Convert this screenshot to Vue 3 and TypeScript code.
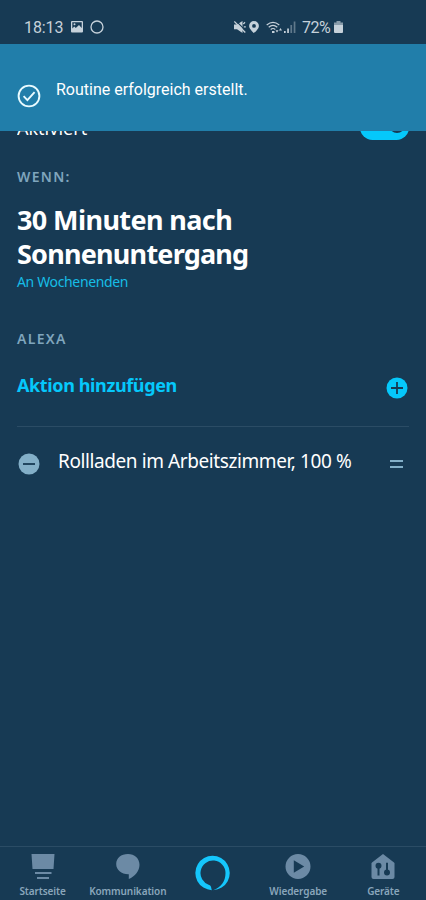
<script setup lang="ts">
interface NavItem { id: string; label: string }
const nav: NavItem[] = [
  { id: 'home', label: 'Startseite' },
  { id: 'chat', label: 'Kommunikation' },
  { id: 'alexa', label: '' },
  { id: 'play', label: 'Wiedergabe' },
  { id: 'devices', label: 'Geräte' },
]
</script>

<template>
  <div class="screen">
    <header class="status">
      <span class="time">18:13</span>
      <svg class="picture" width="12" height="12" viewBox="0 0 12 12"><path fill-rule="evenodd" d="M1 0h10q1 0 1 1v9.500q0 1-1 1H1q-1 0-1-1V1q0-1 1-1zM1.300 1.300v6.200l2-2 1.500 1.500L8 4l2.700 3V1.300zM3.500 2.200a1 1 0 1 1 0 2 1 1 0 0 1 0-2z" /></svg>
      <svg class="ring" width="14" height="14" viewBox="0 0 14 14"><circle cx="7" cy="7" r="6" /></svg>
      <div class="signals">
        <svg width="12" height="12" viewBox="0 0 12 12"><path d="M0 3.500h3L8.500 0v12L3 8.300H0z" /><path class="mute" d="M1.500-.5l11 11" /><path d="M.3.500l11 11M9.300 3l1.700-1.700M9.800 5.800h2" stroke="#c6d1da" stroke-width="1.300" /></svg>
        <svg class="pin" width="10" height="12" viewBox="0 0 10 12"><path fill-rule="evenodd" d="M5 0a4.900 4.900 0 0 1 4.900 4.900C9.900 8 5 12 5 12S.1 8 .1 4.900A4.900 4.900 0 0 1 5 0zm0 3a1.900 1.900 0 1 0 0 3.800A1.900 1.900 0 0 0 5 3z" /></svg>
        <svg class="wifi" width="17" height="13" viewBox="0 0 17 13"><path d="M.7 4Q7 -1.300 13.300 4M2.700 6.300Q7 2.500 11.300 6.300M4.700 8.500Q7 6.500 9.300 8.500" /><path class="traffic" d="M9.500 9.200h3L11 11.500zM13 9.500h3L14.500 7zM6 10h2.500v2H6z" /></svg>
        <svg class="bars" width="12" height="12" viewBox="0 0 12 12"><path d="M0 10h1.700v2H0zM3.200 7.500h1.700V12H3.200z" /><path opacity=".42" d="M6.400 4h1.700v8H6.400zM9.700.5h1.700V12H9.700z" /></svg>
        <span class="percent">72%</span>
        <svg class="battery" width="9" height="12" viewBox="0 0 9 12"><path opacity=".65" d="M2.500 0h4v1.500H9V5H0V1.500h2.500z" /><path d="M0 4h9v7q0 1-1 1H1q-1 0-1-1z" /></svg>
      </div>
    </header>

    <div class="toast">
      <svg width="24" height="24" viewBox="0 0 24 24"><circle cx="12" cy="12" r="10.400" /><path d="M6.600 12.200l3.800 4 7.200-8" /></svg>
      <span class="toast-text">Routine erfolgreich erstellt.</span>
    </div>

    <main>
      <div class="enabled">
        <span class="enabled-label">Aktiviert</span>
        <span class="toggle"><span class="knob"></span></span>
      </div>
      <h2 class="when">WENN:</h2>
      <h1>30 Minuten nach<br><span class="second">Sonnenuntergang</span></h1>
      <p class="days">An Wochenenden</p>
      <h2 class="alexa-title">ALEXA</h2>
      <div class="add">
        <span class="add-label">Aktion hinzufügen</span>
        <svg width="22" height="22" viewBox="0 0 22 22"><circle cx="11" cy="11" r="10.500" fill="#05c8fb" /><path d="M11 5v12M5 11h12" stroke="#173a54" stroke-width="1.800" /></svg>
      </div>
      <div class="action">
        <svg width="22" height="22" viewBox="0 0 22 22"><circle cx="11" cy="11" r="10.500" fill="#83afc8" /><path d="M5 11h12" stroke="#173a54" stroke-width="1.800" /></svg>
        <span class="action-label">Rollladen im Arbeitszimmer, 100 %</span>
        <svg class="handle" width="13" height="10" viewBox="0 0 13 10"><path d="M0 2h13M0 8h13" stroke="#83afc8" stroke-width="2" /></svg>
      </div>
    </main>

    <nav>
      <div v-for="item in nav" :key="item.id" class="tab" :class="item.id">
        <svg v-if="item.id === 'home'" width="26" height="28" viewBox="0 0 26 28"><path d="M1.500 1h23l-1 15h-21zM5 19h16.500v2H5zM7 24h12v2H7z" /></svg>
        <svg v-else-if="item.id === 'chat'" width="26" height="28" viewBox="0 0 26 28"><path d="M13 1c6.500 0 11.500 4.500 11.500 10.800C24.500 18 20 23.500 13.800 26v-4.700C6.500 21.500 1.200 17 1.200 11 1.200 5 6 1 13 1z" /></svg>
        <svg v-else-if="item.id === 'alexa'" width="36" height="36" viewBox="0 0 36 36"><path fill="#15c6fc" d="M16.800 35.200a17.200 17.200 0 1 1 1.500 0c7.500-3 12.200-8.500 12.200-17.200a12.500 12.500 0 1 0-16.400 11.900c1 .3 1.800 1.200 2 2.300z" /></svg>
        <svg v-else-if="item.id === 'play'" width="26" height="28" viewBox="0 0 26 28"><path fill-rule="evenodd" d="M13 1a12.500 12.500 0 1 1 0 25 12.500 12.500 0 0 1 0-25zM8.800 7.300v12.400l10.400-6.200z" /></svg>
        <svg v-else width="26" height="28" viewBox="0 0 26 28"><path d="M13 1l11 8.500q.5.500.5 1V24q0 2-2 2h-19q-2 0-2-2V10.500q0-.5.500-1z" /><g fill="#173a54" stroke="#173a54" stroke-width="2"><circle cx="8.500" cy="12.700" r="2" /><path d="M8.500 13v9.500M17 9.700v9" /><circle cx="17" cy="19.500" r="2" /></g></svg>
        <span v-if="item.label" class="tab-label">{{ item.label }}</span>
      </div>
    </nav>
  </div>
</template>

<style>
body { background: #173a54; }
</style>
<style scoped>
.screen { width: 426px; height: 900px; display: flex; flex-direction: column; overflow: hidden; background: #173a54; color: #fff; font-family: "Noto Sans", sans-serif; white-space: nowrap; }
svg { display: block; flex: none; }
.status { height: 44px; flex: none; display: flex; align-items: center; box-sizing: border-box; padding: 10px 0 0 24px; color: #c6d1da; fill: #c6d1da; font: 16px/20px Roboto, sans-serif; }
.time { width: 47px; padding-top: 1px; letter-spacing: -.1px; }
.ring { margin-left: 7px; fill: none; stroke: #c6d1da; stroke-width: 1.300; }
.signals { display: flex; align-items: center; margin-left: 130px; }
.mute { stroke: #173a54; stroke-width: 1.200; }
.pin { margin-left: 3px; }
.wifi { margin-left: 7px; fill: none; stroke: #c6d1da; stroke-width: 1.200; }
.traffic { fill: #c6d1da; stroke: none; }
.bars { margin-left: 1px; }
.percent { width: 29px; padding-top: 1px; margin-left: 6px; letter-spacing: -.5px; }
.battery { margin-left: 3px; }
.toast { height: 87px; flex: none; box-sizing: border-box; padding: 36px 17px 0; display: flex; align-items: flex-start; background: #217eaa; }
.toast svg { margin-top: 4px; fill: none; stroke: #e9fbff; stroke-width: 1.900; }
.toast-text { margin-left: 15px; font: 16px/20px Roboto, sans-serif; }
main { flex: 1; padding: 0 17px; }
.enabled { height: 9px; display: flex; justify-content: space-between; align-items: flex-end; overflow: hidden; }
.enabled-label { font-size: 18px; line-height: 24px; }
.toggle { width: 49px; height: 25px; flex: none; box-sizing: border-box; border-radius: 13px; background: #05c8fb; display: flex; justify-content: flex-end; align-items: flex-start; padding: 2px 4px 0 0; }
.knob { width: 16px; height: 16px; border-radius: 50%; background: #173a54; }
h1, h2, p { margin: 0; }
h2 { color: #7fa5bd; font-size: 14px; line-height: 18px; font-weight: 600; letter-spacing: 1.300px; }
.when { margin-top: 28px; }
h1 { margin-top: 17px; font-size: 27px; line-height: 34px; font-weight: 700; letter-spacing: -.6px; }
.second { letter-spacing: -.78px; }
.days { margin-top: 2px; color: #16bde6; font-size: 14px; line-height: 18px; letter-spacing: -.35px; }
.alexa-title { margin-top: 39px; }
.add { height: 79px; display: flex; justify-content: space-between; align-items: center; box-sizing: border-box; padding: 2px 1px 0 0; border-bottom: 1px solid #2b4c65; }
.add-label { color: #05c8fb; font-size: 18px; font-weight: 700; line-height: 24px; margin-bottom: 7px; letter-spacing: -.38px; }
.action { display: flex; align-items: center; padding: 21px 6px 0 1px; }
.action-label { margin-left: 18px; font-size: 19px; line-height: 26px; margin-bottom: 5px; letter-spacing: -.41px; }
.handle { margin-left: auto; }
nav { height: 54px; flex: none; box-sizing: border-box; border-top: 1px solid #2b4c65; display: grid; grid-template-columns: repeat(5, 1fr); }
.tab { display: flex; flex-direction: column; align-items: center; padding-top: 6px; fill: #6c8aa5; }
.tab.alexa { padding-top: 8px; }
.tab-label { color: #8aa6bb; font-size: 10px; line-height: 14px; font-weight: 600; margin-top: 3px; letter-spacing: -.1px; }
</style>
